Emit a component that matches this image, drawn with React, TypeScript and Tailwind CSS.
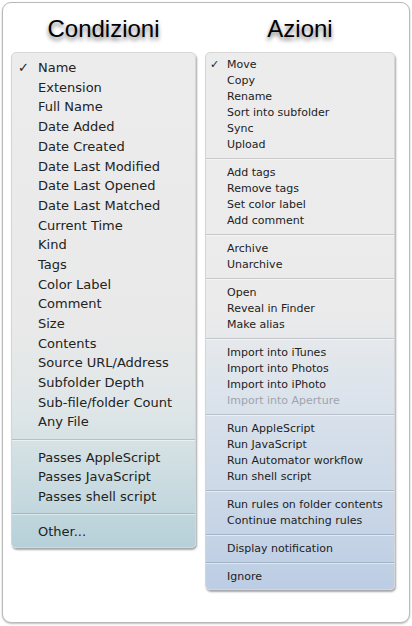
const conditions = [
  ['Name', 'Extension', 'Full Name', 'Date Added', 'Date Created', 'Date Last Modified', 'Date Last Opened', 'Date Last Matched', 'Current Time', 'Kind', 'Tags', 'Color Label', 'Comment', 'Size', 'Contents', 'Source URL/Address', 'Subfolder Depth', 'Sub-file/folder Count', 'Any File'],
  ['Passes AppleScript', 'Passes JavaScript', 'Passes shell script'],
  ['Other...'],
];

const actions = [
  ['Move', 'Copy', 'Rename', 'Sort into subfolder', 'Sync', 'Upload'],
  ['Add tags', 'Remove tags', 'Set color label', 'Add comment'],
  ['Archive', 'Unarchive'],
  ['Open', 'Reveal in Finder', 'Make alias'],
  ['Import into iTunes', 'Import into Photos', 'Import into iPhoto', 'Import into Aperture'],
  ['Run AppleScript', 'Run JavaScript', 'Run Automator workflow', 'Run shell script'],
  ['Run rules on folder contents', 'Continue matching rules'],
  ['Display notification'],
  ['Ignore'],
];

const Separator = ({ big }: { big?: boolean }) => (
  <div className={`${big ? 'h-[15.5px]' : 'h-[12px]'} flex items-center`}>
    <div className="w-full h-[2px] border-t border-b border-t-black/15 border-b-white/50" />
  </div>
);

const Menu = ({ groups, big }: { groups: string[][]; big?: boolean }) => (
  <div
    className={`rounded-[5px] border border-[#d6d6d6] shadow-[1px_2px_2px_rgba(0,0,0,0.35)] font-['DejaVu_Sans',Verdana,sans-serif] ${
      big
        ? 'w-[185px] pt-[5px] pb-[5px] bg-[linear-gradient(180deg,#ececec_0%,#e9e9e9_55%,#dfe6e8_72%,#c9dbe0_88%,#b6d0d9_100%)]'
        : 'w-[190px] pt-[4px] pb-[4px] bg-[linear-gradient(180deg,#ececec_0%,#ebebeb_48%,#dde4ec_62%,#cfdbe8_78%,#bccde4_100%)]'
    }`}
  >
    {groups.map((group, gi) => (
      <div key={gi}>
        {gi > 0 && <Separator big={big} />}
        {group.map((item, ii) => (
          <div
            key={item}
            className={`flex items-center ${
              big ? 'h-[19.7px] text-[13px] pl-[6px]' : 'h-[16px] text-[11px] pl-[4px]'
            } ${item === 'Import into Aperture' ? 'text-[#9ea5ad]' : 'text-[#222222]'}`}
          >
            <span className={big ? 'w-[20px] text-[13px] font-bold' : 'w-[17px] text-[11px] font-bold'}>
              {gi === 0 && ii === 0 ? '✓' : ''}
            </span>
            <span>{item}</span>
          </div>
        ))}
      </div>
    ))}
  </div>
);

export default function App() {
  return (
    <div className="w-[412px] h-[626px] bg-white p-[2px] font-['Liberation_Sans',Arial,sans-serif]">
      <div className="w-[408px] h-[621px] rounded-[9px] border border-[#b9b9b9] shadow-[0_1px_2px_rgba(0,0,0,0.25)] bg-white flex gap-[9px] pl-[8px]">
        <div className="flex flex-col">
          <div className="h-[49px] pt-[3px] flex items-center justify-center text-[24px] text-black [text-shadow:0_3px_4px_rgba(0,0,0,0.55)]">
            Condizioni
          </div>
          <Menu groups={conditions} big />
        </div>
        <div className="flex flex-col">
          <div className="h-[49px] pt-[3px] flex items-center justify-center text-[24px] text-black [text-shadow:0_3px_4px_rgba(0,0,0,0.55)]">
            Azioni
          </div>
          <Menu groups={actions} />
        </div>
      </div>
    </div>
  );
}
